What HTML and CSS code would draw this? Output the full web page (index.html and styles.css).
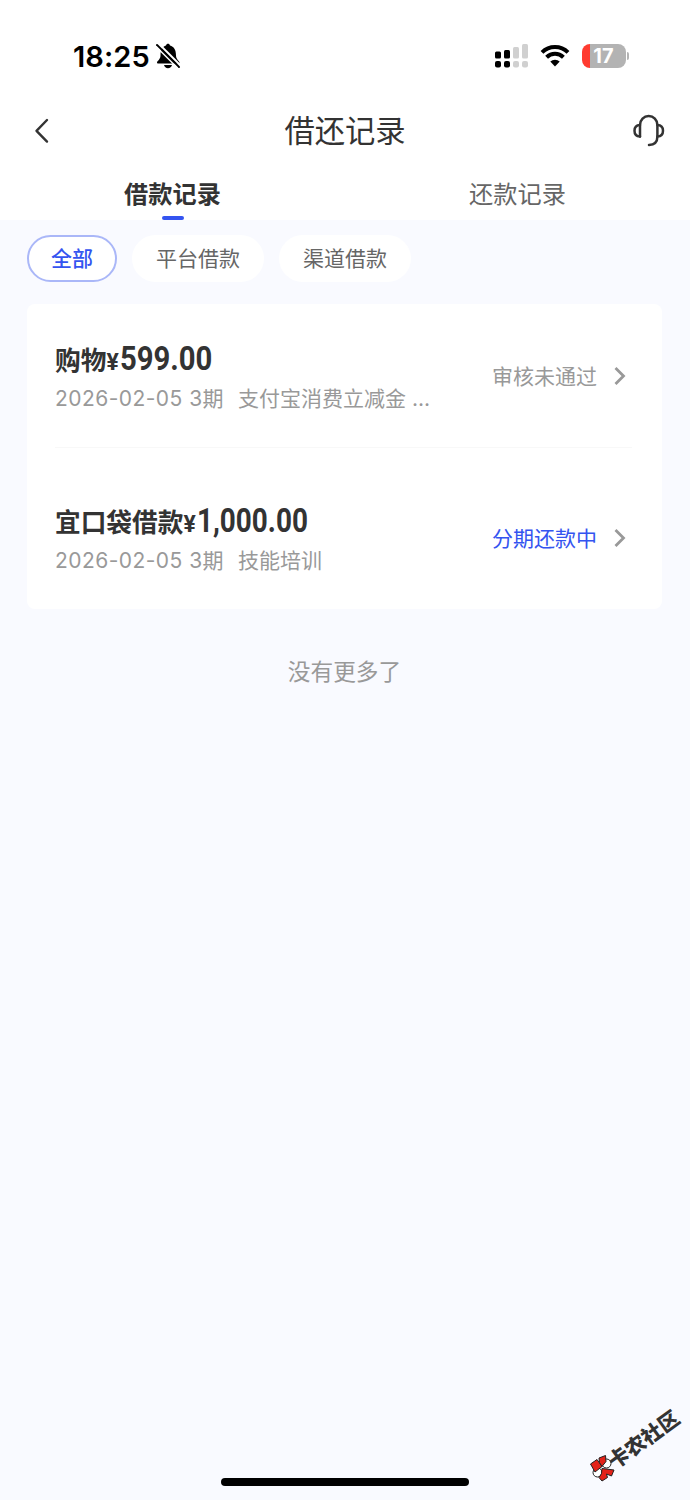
FILE: index.html
```html
<!DOCTYPE html>
<html lang="zh-CN">
<head>
<meta charset="utf-8">
<title>借还记录</title>
<link rel="stylesheet" href="styles.css">
</head>
<body>
<div class="screen">
  <header class="top">
    <div class="status">
      <div class="clock"><span class="time">18:25</span>
        <svg class="bell" width="26" height="28" viewBox="0 0 26 28"><path d="M2 20.500c0-1.500 3.500-3 3.500-7C5.500 7.500 7.500 4.500 11 3.500c.3-1.200 1-1.700 2-1.700s1.700.5 2 1.700c3.800 1 6 4 6 10 0 4 3.500 5.500 3.500 7 0 .7-.5 1-1.200 1H3.200c-.7 0-1.200-.3-1.200-1zM9 23h8c-.4 2-2 3.200-4 3.200S9.400 25 9 23z"/><path d="M3.500 1.500L26 24" stroke="#fff" stroke-width="2"/><path d="M2 3L24 25" stroke="#000" stroke-width="2" stroke-linecap="round"/><path d="M1 4.500L22.500 26" stroke="#fff" stroke-width="1.500"/></svg>
      </div>
      <div class="indicators">
        <svg width="34" height="26" viewBox="0 0 34 26"><g fill="#000"><rect x="0" y="8.500" width="6" height="7" rx="1.500"/><rect x="9" y="7" width="6" height="8.500" rx="1.500"/><rect x="0" y="18" width="6" height="6.500" rx="2"/><rect x="9" y="18" width="6" height="6.500" rx="2"/></g><g fill="#d0d0d0"><rect x="18" y="4" width="6" height="11.500" rx="1.500"/><rect x="27" y="1" width="6" height="14.500" rx="1.500"/><rect x="18" y="18" width="6" height="6.500" rx="2"/><rect x="27" y="18" width="6" height="6.500" rx="2"/></g></svg>
        <svg class="wifi" width="30" height="26" viewBox="0 0 30 26"><g fill="none" stroke="#000" stroke-width="4"><path d="M2 9.400a18.500 18.500 0 0 1 26 0"/><path d="M6.600 14.200a12 12 0 0 1 16.800 0"/></g><path d="M10.300 18.600a6.700 6.700 0 0 1 9.400 0L15 23.500z"/></svg>
        <div class="battery"><span>17</span></div><i class="nub"></i>
      </div>
    </div>
    <div class="nav">
      <svg class="back" width="16" height="26" viewBox="0 0 16 26"><path d="M13 2L2.500 12.800 13 23.600" fill="none" stroke="#333" stroke-width="2.400" stroke-linecap="round" stroke-linejoin="round"/></svg>
      <h1>借还记录</h1>
      <svg class="service" width="34" height="34" viewBox="0 0 34 34"><g fill="none" stroke="#333" stroke-width="2.500" stroke-linecap="round" stroke-linejoin="round"><path d="M8 22.500V11a8.700 9 0 0 1 17.400 0v11.500c0 5-3 8.300-8.400 8.500"/><path d="M8 11c-3.500.2-5.500 2.500-5.500 5.700s2 5.600 5.500 5.800M25.400 11c3.500.2 5.600 2.500 5.600 5.700s-2.100 5.600-5.600 5.800"/></g></svg>
    </div>
    <nav class="tabs"><a class="tab active">借款记录</a><a class="tab">还款记录</a></nav>
  </header>
  <main>
    <div class="chips"><span class="chip selected">全部</span><span class="chip">平台借款</span><span class="chip">渠道借款</span></div>
    <section class="card">
      <article class="row">
        <div class="info">
          <div class="name">购物<span class="yen">¥</span><span class="amount">599.00</span></div>
          <div class="meta"><span class="date">2026-02-05 3期</span><span>支付宝消费立减金 ...</span></div>
        </div>
        <div class="state">审核未通过</div>
        <svg class="more" width="14" height="20" viewBox="0 0 14 20"><path d="M2.500 2L10.500 10l-8 8" fill="none" stroke="#999" stroke-width="2.800"/></svg>
      </article>
      <article class="row">
        <div class="info">
          <div class="name">宜口袋借款<span class="yen">¥</span><span class="amount long">1,000.00</span></div>
          <div class="meta"><span class="date">2026-02-05 3期</span><span>技能培训</span></div>
        </div>
        <div class="state paying">分期还款中</div>
        <svg class="more" width="14" height="20" viewBox="0 0 14 20"><path d="M2.500 2L10.500 10l-8 8" fill="none" stroke="#999" stroke-width="2.800"/></svg>
      </article>
    </section>
    <p class="end">没有更多了</p>
  </main>
  <div class="brand">
    <svg width="27" height="28" viewBox="0 0 27 28"><g stroke="#222" stroke-width="1"><circle cx="17.500" cy="9.500" r="4.500" fill="#fff"/><circle cx="8.500" cy="18.500" r="4.500" fill="#fff"/><path d="M1.500 10L8 5.500l5 7L6 18z" fill="#e32219"/><path d="M10 4l6.500-2.500.5 6-4 5-2.500-4z" fill="#e32219"/><path d="M13 14.500l12 1.500-2.500 6-5-2 1 3.500-5.500 3.500-3-3.500 2.500-4z" fill="#e32219"/></g></svg>
    <span class="brand-name">卡农社区</span>
  </div>
  <div class="home"></div>
</div>
</body>
</html>
```
FILE: styles.css
```css
* { box-sizing: border-box; }
body { margin: 0; font-family: Inter, "Noto Sans CJK SC", sans-serif; color: #333; }
.screen { position: relative; width: 690px; height: 1500px; background: #f9faff; overflow: hidden; }
.top { height: 220px; background: #fff; display: flex; flex-direction: column; }
.status { height: 92px; padding: 20px 61px 0 73px; display: flex; justify-content: space-between; align-items: center; }
.clock { display: flex; align-items: center; gap: 5px; color: #000; }
.time { padding-top: 1px; font-size: 29px; font-weight: 600; line-height: 34px; letter-spacing: .1px; }
.indicators { display: flex; align-items: center; }
.wifi { margin: 0 12px 0 11px; }
.battery { width: 44px; height: 24px; border-radius: 8px; background: linear-gradient(90deg, #ff3b30 8px, #b3b3b3 8px); color: #fff; font-size: 20px; font-weight: 700; line-height: 25px; text-align: center; padding-right: 1px; }
.nub { width: 2px; height: 8px; margin-left: 1px; border-radius: 0 3px 3px 0; background: #b3b3b3; }
.nav { height: 78px; padding: 0 25px 0 34px; display: grid; grid-template-columns: 34px 1fr 34px; align-items: center; }
.nav h1 { margin: 0 0 0 -9px; font-size: 30.300px; font-weight: 400; line-height: 40px; text-align: center; }
.service { margin-left: 1px; }
.tabs { height: 50px; display: grid; grid-template-columns: 1fr 1fr; }
.tab { display: flex; flex-direction: column; align-items: center; justify-content: space-between; font-size: 24.200px; line-height: 50px; color: #666; }
.tab.active { font-weight: 700; color: #333; }
.tab.active::after { content: ""; width: 22px; height: 4px; margin-top: -4px; border-radius: 2px; background: #3454f0; }
main { padding: 15px 28px 0 27px; }
.chips { display: flex; gap: 15px; }
.chip { height: 47px; padding: 0 24px; border-radius: 24px; background: #fff; font-size: 21px; line-height: 48px; color: #666; }
.chip.selected { padding: 0 22px; border: 2px solid #aab7f8; line-height: 44px; color: #3454f0; font-weight: 500; }
.card { height: 305px; margin-top: 22px; padding: 0 30px 0 28px; border-radius: 8px; background: #fff; }
.row { height: 143px; display: flex; align-items: center; }
.row + .row { height: 162px; padding-top: 18px; border-top: 1px solid #f8f8f8; }
.info { flex: 1; }
.name { height: 42px; display: flex; align-items: baseline; font-size: 25.700px; font-weight: 600; line-height: 42px; white-space: nowrap; }
.yen { width: 14px; font-family: Roboto, sans-serif; font-size: 23px; font-weight: 700; }
.amount { font-family: Roboto, sans-serif; font-size: 34px; font-weight: 700; transform: scaleX(.86); transform-origin: left; }
.amount.long { transform: scaleX(.82); }
.meta { padding-top: 2px; margin-bottom: -2px; display: flex; gap: 14px; font-size: 21px; line-height: 36px; color: #999; white-space: nowrap; }
.date { letter-spacing: .45px; }
.state { margin-top: -2px; font-size: 21px; color: #999; }
.state.paying { color: #3454f0; }
.more { margin: 0 5px 0 16px; }
.end { margin: 44px 0 0 0; font-size: 22.700px; line-height: 38px; text-align: center; color: #999; }
.brand { position: absolute; left: 589px; top: 1424px; display: flex; align-items: flex-end; height: 58px; }
.brand-name { margin: 0 0 28px -13px; font-size: 20.500px; font-weight: 900; line-height: 28px; white-space: nowrap; transform: rotate(-36deg); }
.home { position: absolute; left: 221px; top: 1478px; width: 248px; height: 8px; border-radius: 4px; background: #000; }
```
